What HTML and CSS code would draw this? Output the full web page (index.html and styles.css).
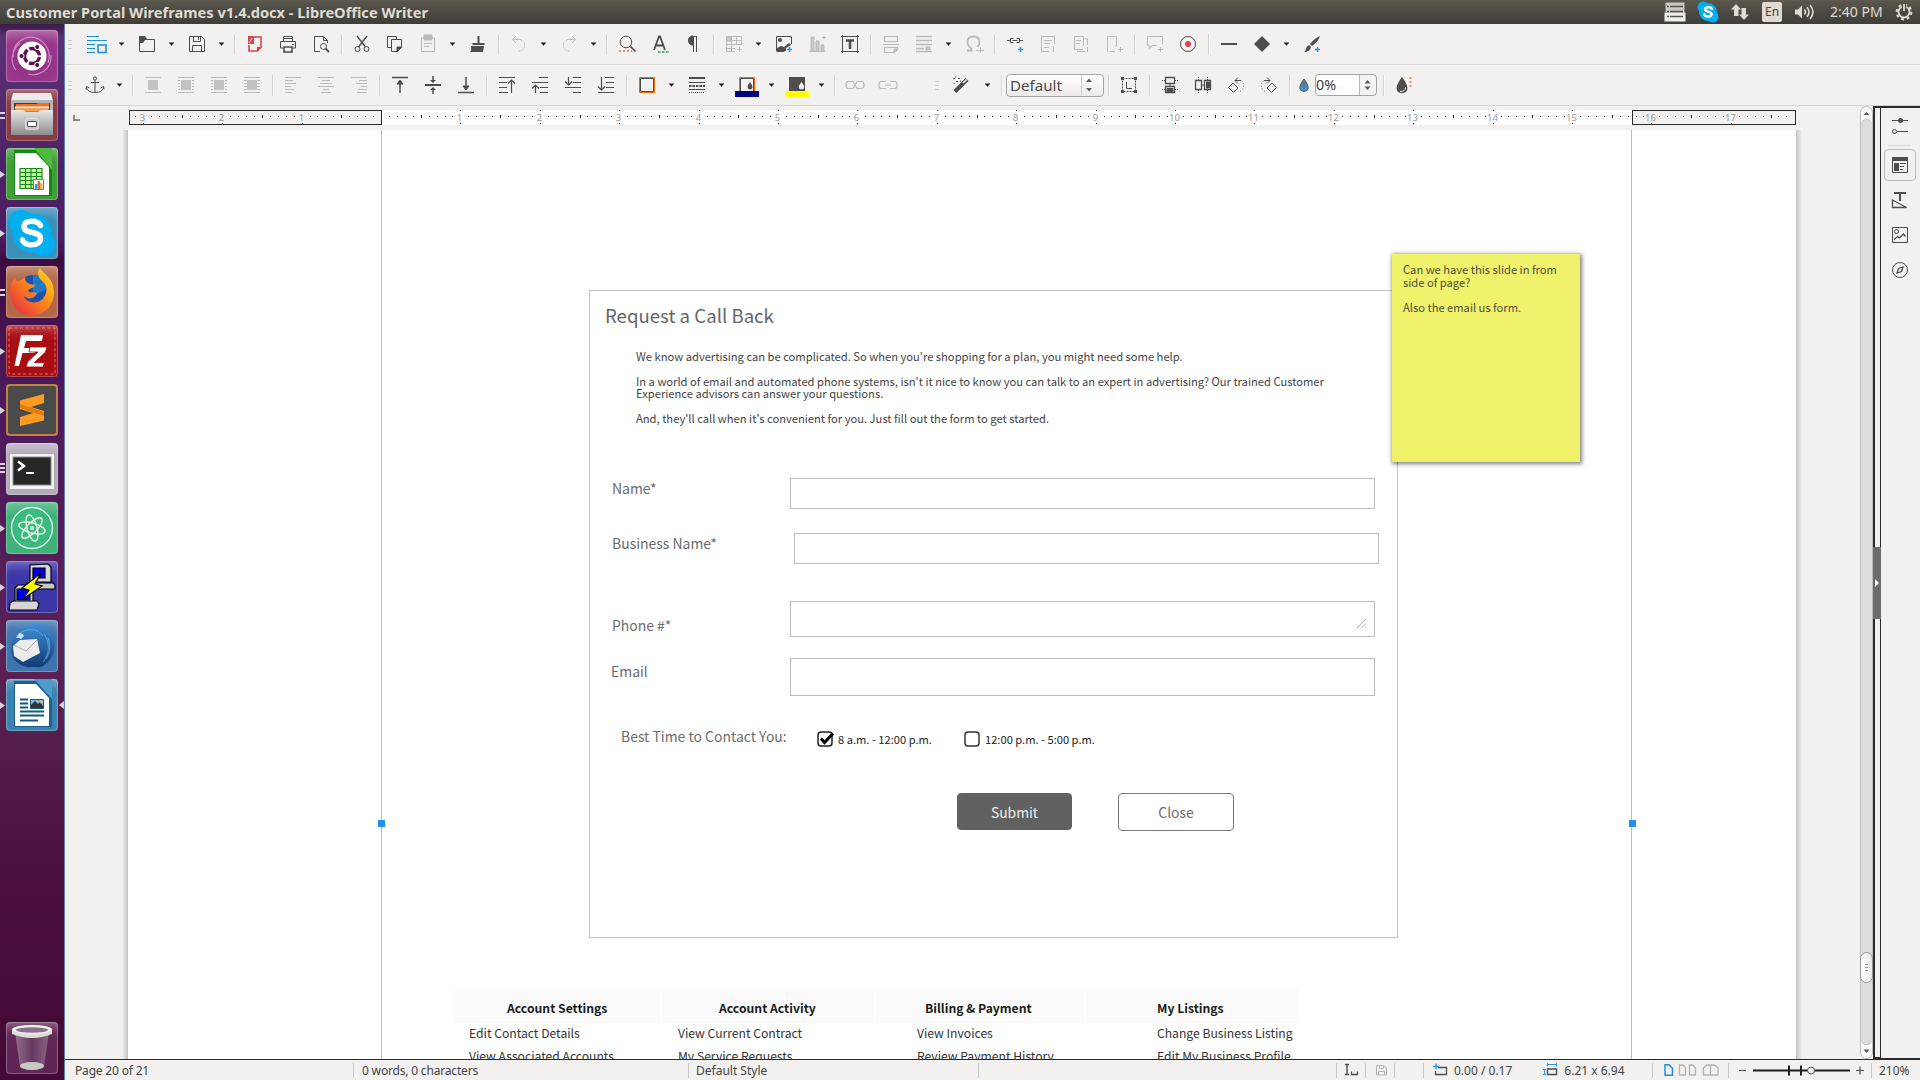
FILE: index.html
```
<!DOCTYPE html>
<html lang="en">
<head>
<meta charset="utf-8">
<title>Customer Portal Wireframes v1.4.docx - LibreOffice Writer</title>
<link rel="stylesheet" href="styles.css">
</head>
<body>
<svg class="defs" width="0" height="0">
  <defs>
    <symbol id="drop" viewBox="0 0 17 24"><path d="M6 10.500h5v1H10v1H9v1H8v-1H7v-1H6z" fill="#1a1a1a"/></symbol>
    <symbol id="grip" viewBox="0 0 6 24"><path d="M0 8.500h4M0 12.500h4M0 16.500h4" stroke="#cbcac8"/></symbol>
    <linearGradient id="steel" x1="0" y1="0" x2="0" y2="1"><stop offset="0" stop-color="#e6e6e6"/><stop offset="1" stop-color="#8e8e8e"/></linearGradient>
    <linearGradient id="fox" x1="1" y1="0" x2="0" y2="1"><stop offset="0" stop-color="#ffe226"/><stop offset=".45" stop-color="#ff8a16"/><stop offset="1" stop-color="#e6214a"/></linearGradient>
    <linearGradient id="bird" x1="0" y1="0" x2="0" y2="1"><stop offset="0" stop-color="#3f8fd6"/><stop offset="1" stop-color="#123a72"/></linearGradient>
    <linearGradient id="bin" x1="0" y1="0" x2="1" y2="0"><stop offset="0" stop-color="#b9a3b7"/><stop offset=".5" stop-color="#6b4468"/><stop offset="1" stop-color="#a78fa5"/></linearGradient>
  </defs>
</svg>

<header class="panel">
  <h1 class="title">Customer Portal Wireframes v1.4.docx - LibreOffice Writer</h1>
  <div class="indicators">
    <svg width="22" height="20" viewBox="0 0 22 20"><path d="M1.500.5h19v10h-19z" fill="#c9c8c4"/><path d="M.5 10.500h21v9H.5z" fill="#efefed"/><path d="M3 4.500h2m1 0h13M3 9.500h2m1 0h13M3 14.500h2m1 0h13" stroke="#55544e" stroke-width="1.500"/></svg>
    <svg width="22" height="22" viewBox="0 0 22 22"><circle cx="11" cy="11" r="9" fill="#00aff0"/><circle cx="6" cy="6" r="5.500" fill="#00aff0"/><circle cx="16" cy="16" r="5.500" fill="#00aff0"/><path d="M15 7.800C14 6 8 5.400 8 8.300c0 3 6.600 1.600 6.600 4.900 0 3.200-6.600 2.700-7.400.4" fill="none" stroke="#fff" stroke-width="2.500" stroke-linecap="round"/></svg>
    <svg width="18" height="18" viewBox="0 0 18 18"><path d="M5 1L0 6.500h3V13h4.500V6.500H10zM13 17l5-5.500h-3V5h-4.500v6.500H8z" fill="#dfdbd2"/></svg>
    <span class="lang">En</span>
    <svg width="22" height="18" viewBox="0 0 22 18"><path d="M1 6.500h3L8 2.500v13l-4-4H1z" fill="#dfdbd2"/><path d="M10.500 6.500q2 2.500 0 5M13 4.200q4 4.800 0 9.600M16 2q6 7 0 14" fill="none" stroke="#dfdbd2" stroke-width="1.600"/></svg>
    <span class="clock">2:40 PM</span>
    <svg width="18" height="18" viewBox="0 0 18 18"><circle cx="9" cy="9" r="7.300" fill="none" stroke="#dfdbd2" stroke-width="2.200" stroke-dasharray="2.800 2.930"/><circle cx="9" cy="9" r="5.500" fill="none" stroke="#dfdbd2" stroke-width="1.800"/><path d="M6.800 0h4.400v6H6.800z" fill="#504e47"/><path d="M9 1v7" stroke="#dfdbd2" stroke-width="1.800"/></svg>
  </div>
</header>

<div class="desktop">
<nav class="launcher">
  <div class="tile ubuntu"><svg viewBox="0 0 52 52"><path d="M7 27C6 12 20 5 30 8c10 4 16 14 12 25M45 25c1 15-13 22-23 19M10 40C2 30 8 18 14 13" fill="none" stroke="#d9a0cc" stroke-width="1.200" opacity=".8"/><circle cx="26" cy="26" r="14.500" fill="#fff"/><circle cx="26" cy="26" r="7.500" fill="none" stroke="#5c1150" stroke-width="3.400" stroke-dasharray="13.700 2" stroke-dashoffset="-1"/><g fill="#5c1150" stroke="#fff"><circle cx="15.500" cy="26" r="2.600"/><circle cx="31.200" cy="17" r="2.600"/><circle cx="31.200" cy="35" r="2.600"/></g></svg></div>
  <div class="tile files"><i class="pips two"></i><svg viewBox="0 0 52 52"><path d="M7 4h38l2 8H5z" fill="#ececec"/><path d="M5 11h42v14H5z" fill="#b5b5b5"/><path d="M8 14h36v10H8z" fill="#3c3c3c"/><path d="M10 15h20l2-1h11v9H9z" fill="#e8732c"/><path d="M9 17.500h34V19H9z" fill="#fff3e0"/><path d="M9 19h34v3H9z" fill="#f0a25a"/><path d="M5 21h12l3 2h12l3-2h12v25H5z" fill="url(#steel)"/><rect x="19.500" y="29.500" width="13" height="11" rx="2" fill="#c9c9c9" stroke="#dedede"/><rect x="21.500" y="32.500" width="9" height="5" rx="1" fill="#fff" stroke="#444"/></svg></div>
  <div class="tile calc"><i class="pips one"></i><svg viewBox="0 0 52 52"><path d="M8 2h28l10 10v36H8z" fill="#148a14"/><path d="M28 0h18v22z" fill="#4fb83e"/><path d="M9 5h21l13 14v28H9z" fill="#fff"/><path d="M14 20.500h22v20H14zM14 24.500h22M14 28.500h22M14 32.500h22M14 36.500h22M19.500 20v20M25 20v20M30.500 20v20" fill="#c5f3a3" stroke="#1b8a1b" stroke-width="1.200"/><path d="M27.500 31.500h10v10h-10z" fill="#fff" stroke="#777"/><path d="M29 36h2.500v5H29z" fill="#2aa5e0"/><path d="M31.500 33H34v8h-2.500z" fill="#ea6a2c"/><path d="M34 35h2.500v6H34z" fill="#f0b24a"/></svg></div>
  <div class="tile skype"><i class="pips one"></i><svg viewBox="0 0 52 52"><circle cx="26" cy="26" r="19.500" fill="#00aff0"/><circle cx="15" cy="15" r="12" fill="#00aff0"/><circle cx="37" cy="37" r="12" fill="#00aff0"/><path d="M34.500 18.500C32 13 18 12 18 19.500c0 8.500 16.500 3.500 16.500 12 0 8.500-16.500 8-18 1.500" fill="none" stroke="#fff" stroke-width="5.500" stroke-linecap="round"/></svg></div>
  <div class="tile firefox"><i class="pips two"></i><svg viewBox="0 0 52 52"><circle cx="27" cy="25" r="16" fill="#1c4fae"/><path d="M27 9c8 0 13 6 14 14L27 30z" fill="#1fa3e0" opacity=".5"/><path d="M4 26c0-7 2-11 5-14l2 4c3-2 6-3 8-5 0 4 2 6 5 7l5 1c0 3-6 3-7 6 3 3 6 0 9 2-2 6-9 7-13 3 2 8 18 10 22-3 2-7-2-10-5-13-4-5-4-9-1-12 2 5 14 9 14 25 0 12-9 22-22 22S4 39 4 26z" fill="url(#fox)"/></svg></div>
  <div class="tile filezilla"><i class="pips one"></i><svg viewBox="0 0 52 52"><rect x="3" y="3" width="46" height="46" fill="none" stroke="#e5a0a0" stroke-width="1" stroke-dasharray="3 2.500" opacity=".7"/><path d="M15 10h22l-1 6H20l-2 7h12l-1.500 5H16.500L13 41H8.500z" fill="#fff"/><path d="M24 22h17l-1.500 5-11 10.500h10L37 42H20l1.500-5L32 27h-9z" fill="#fff" stroke="#b00000" stroke-width=".8"/></svg></div>
  <div class="tile sublime"><i class="pips one"></i><svg viewBox="0 0 52 52"><path d="M38 10v9l-13 4 13 4v9.500L14 42v-9l13-4-13-4v-8.500z" fill="#ff9a22"/><path d="M14 20l24 8v4l-24-8z" fill="#e8790d"/></svg></div>
  <div class="tile terminal"><i class="pips three"></i><svg viewBox="0 0 52 52"><rect x="3.500" y="10.500" width="45" height="36" rx="1" fill="#f2f2f2" stroke="#aaa"/><rect x="7" y="14" width="38" height="28" fill="#262828" stroke="#8b8b8b"/><path d="M12 18.500l6 4.500-6 4.500" fill="none" stroke="#fff" stroke-width="2.400"/><path d="M20 30h8" stroke="#fff" stroke-width="2"/></svg></div>
  <div class="tile atom"><i class="pips one"></i><svg viewBox="0 0 52 52"><circle cx="26" cy="26" r="20.500" fill="#3cb97f" stroke="#e4f6e8" stroke-width="1.300"/><g fill="none" stroke="#e4f6e8" stroke-width="1.400"><ellipse cx="26" cy="26" rx="13.500" ry="5" transform="rotate(15 26 26)"/><ellipse cx="26" cy="26" rx="13.500" ry="5" transform="rotate(75 26 26)"/><ellipse cx="26" cy="26" rx="13.500" ry="5" transform="rotate(-45 26 26)"/></g><circle cx="26" cy="26" r="2" fill="#e4f6e8"/></svg></div>
  <div class="tile putty"><i class="pips one"></i><svg viewBox="0 0 52 52"><g stroke="#000" stroke-width="1.200"><path d="M24 4l18-1 3 3v15H24z" fill="#d6d6d6"/><path d="M27 7h12v10H27z" fill="#0000f0"/><path d="M21 22h26l2 2v4H21z" fill="#c9c9c9"/><path d="M9 27l3-3h15v18H9z" fill="#d6d6d6"/><path d="M11 28h13v11H11z" fill="#0000f0"/><path d="M4 42l3-2h24l2 3-2 6H3z" fill="#d6d6d6"/><path d="M35 12L16 27l7 2-6 9 19-13-7-2z" fill="#ff0"/></g></svg></div>
  <div class="tile thunderbird"><i class="pips one"></i><svg viewBox="0 0 52 52"><path d="M13 13C18 3 34 1 42 9c9 9 8 25 0 33-5 5-9 6-13 5l-8 0C11 45 4 37 5 28c0-6 3-11 8-15z" fill="url(#bird)"/><path d="M14 13c7-5 18-5 23 3M38 14c6 8 6 20-1 28M42 18c3 8 2 15-2 21" fill="none" stroke="#6fb2ea" opacity=".7"/><path d="M7 26l7-6 17-1 3 14-17 9-9-6z" fill="#ecebe9"/><path d="M8 25l12 6 11-11" fill="none" stroke="#b1aea9"/><path d="M13 13q4 0 5 3l-3 3q-3-2-5-1z" fill="#bfe0f8"/></svg></div>
  <div class="tile writer"><i class="pips one"></i><i class="focus"></i><svg viewBox="0 0 52 52"><path d="M8 2h28l10 10v36H8z" fill="#1c608f"/><path d="M28 0h18v20z" fill="#4b9cc6"/><path d="M9 5h21l13 14v28H9z" fill="#fff"/><path d="M14 20.500h8M14 24.500h8M14 28.500h8M14 32.500h24M14 36.500h24M14 41.500h18" stroke="#12577d" stroke-width="1.800"/><path d="M24.500 20.500h13v9h-13z" fill="#7fb9dd" stroke="#12577d"/><path d="M25 29v-3l4-4 3 3 2-2 3 4v2z" fill="#333"/><circle cx="35" cy="23" r="1.300" fill="#f2c230"/></svg></div>
  <div class="tile trash"><svg viewBox="0 0 52 52"><path d="M9 10h34l-5 35q-12 6-24 0z" fill="url(#bin)" opacity=".6"/><ellipse cx="26" cy="44" rx="12" ry="4" fill="#c7c9c5"/><path d="M6 7v5q20 8 40 0V7z" fill="#dcdedb"/><ellipse cx="26" cy="7.500" rx="20" ry="4.500" fill="#f0f1ef"/><ellipse cx="26" cy="8" rx="16" ry="2.800" fill="#8b6f89"/></svg></div>
</nav>

<main class="window">
  <div class="toolbar standard">
    <svg class="grip"><use href="#grip"/></svg>
    <svg class="ic" viewBox="0 0 24 24"><path d="M2 4.500h12M2 8.500h20M2 12.500h8M2 16.500h8M2 20.500h8" stroke="#1e8fe0" stroke-width="1.200"/><rect x="13" y="13" width="8" height="7.500" stroke="#1e8fe0" stroke-width="1.600"/></svg><svg class="dd"><use href="#drop"/></svg>
    <svg class="ic" viewBox="0 0 24 24"><path d="M4 4h6l2 3 8 1H10L8 11H4z" fill="#4d4d4d" stroke="none"/><path d="M4.500 5v14.500h15v-12H9"/></svg><svg class="dd"><use href="#drop"/></svg>
    <svg class="ic" viewBox="0 0 24 24"><path d="M4.500 4.500h12l3 3v12h-15zM8.500 4.500v5h7v-5M7.500 19.500v-6h9v6M13.500 5v3"/></svg><svg class="dd"><use href="#drop"/></svg>
    <i class="sep"></i>
    <svg class="ic" viewBox="0 0 24 24"><path d="M10 5h8v10l-4 4H6v-6" stroke="#d9414e" stroke-width="1.600"/><path d="M5 4h6v8H5zM14 15h5l-5 5z" fill="#d9414e" stroke="none"/><path d="M6 11l3-5" stroke="#fff"/></svg>
    <svg class="ic" viewBox="0 0 24 24"><path d="M7.500 9V4.500h9V9M7 6.500h9M7.500 16h-3V9.500h15V16h-3M16 12.500h2"/><path d="M8 15h8v5H8z" stroke-width="1.600"/></svg>
    <svg class="ic" viewBox="0 0 24 24"><path d="M11 19.500H5.500v-15h9l4 4V11M14.500 4.500v4h4"/><circle cx="14.500" cy="14.500" r="3"/><path d="M16.500 16.500l3.500 3.500" stroke-width="1.800"/></svg>
    <i class="sep"></i>
    <svg class="ic" viewBox="0 0 24 24"><path d="M7 4l8.500 11M17 4L8.500 15" stroke-width="1.400"/><circle cx="7.500" cy="17" r="2.500"/><circle cx="16.500" cy="17" r="2.500"/></svg>
    <svg class="ic" viewBox="0 0 24 24"><path d="M8 15.500H4.500v-11h9V7M8.500 7.500h10v8l-4 4h-6z"/><path d="M14 15h5l-5 5z" fill="#4d4d4d"/></svg>
    <svg class="ic dim" viewBox="0 0 24 24"><path d="M5.500 6v13.500h13V6H5z"/><path d="M8 3h8v5H8z" fill="#4d4d4d"/><path d="M8 11.500h8M8 14.500h5"/></svg><svg class="dd"><use href="#drop"/></svg>
    <svg class="ic" viewBox="0 0 24 24"><path d="M11.500 4h2v7h5v2h-12v-2h5zM5 14h13l-1 6H4c2-2 1-4 1-6z" fill="#4d4d4d" stroke="none"/></svg>
    <i class="sep"></i>
    <svg class="ic dim" viewBox="0 0 24 24"><path d="M9 4L5.500 7.500 9 11M6 7.500h7"/><path d="M13 7.500q4.500 1 4.500 6t-7 6" stroke-dasharray="2 1"/></svg><svg class="dd"><use href="#drop"/></svg>
    <svg class="ic dim" viewBox="0 0 24 24"><path d="M15 4l3.500 3.500L15 11M18 7.500h-7"/><path d="M11 7.500q-4.500 1-4.500 6t7 6" stroke-dasharray="2 1"/></svg><svg class="dd"><use href="#drop"/></svg>
    <i class="sep"></i>
    <svg class="ic" viewBox="0 0 24 24"><circle cx="11" cy="10" r="5.800"/><path d="M15 14l5.500 5.500" stroke-width="1.600"/><path d="M4 19h13" stroke="#f08a6c" stroke-width="2" stroke-dasharray="2 2"/></svg>
    <svg class="ic" viewBox="0 0 24 24"><path d="M6 18l5-13.500h1L17 18M8 13.500h7" stroke-width="1.800"/><path d="M10 20h11" stroke="#52b77e" stroke-width="2" stroke-dasharray="2.500 1.500"/></svg>
    <svg class="ic" viewBox="0 0 24 24"><path d="M12 4v9q-4.500 0-4.500-4.500T12 4z" fill="#4d4d4d"/><path d="M11 4.500h5M12.500 4v16M15.500 4v16"/></svg>
    <i class="sep"></i>
    <svg class="ic dim" viewBox="0 0 24 24"><path d="M13 19.500H4.500v-15h15V13M4 8.500h15M4 12.500h15M4 16.500h9M9.500 4v15M14.500 4v9M15 17.500h5M17.500 15v5"/><path d="M5 5h4v4H5z" fill="#777"/></svg><svg class="dd"><use href="#drop"/></svg>
    <svg class="ic" viewBox="0 0 24 24"><path d="M4.500 19V4.500h15V12M4.500 19.500h8"/><circle cx="8" cy="8" r="2" fill="#4d4d4d" stroke="none"/><path d="M5 19v-3l4-2 3 1 5-4 2 2-5 3v3z" fill="#4d4d4d" stroke="none"/><path d="M15 17.500h5M17.500 15v5" stroke="#2196f3" stroke-width="1.500"/></svg>
    <svg class="ic dim" viewBox="0 0 24 24"><path d="M4 19.500h16M17 5.500h4M19 3.500v4"/><path d="M6 5h3v14H6zM11 9h3v10h-3zM16 13h3v6h-3z" fill="#777"/></svg>
    <svg class="ic" viewBox="0 0 24 24"><path d="M3 4.500h18M3 19.500h18M4.500 3v18M19.500 3v18"/><path d="M8 8.500h8M12 8v9" stroke-width="2.500"/></svg>
    <i class="sep"></i>
    <svg class="ic dim" viewBox="0 0 24 24"><path d="M5.500 4v5.500h13V4.500h-13M4 12.500h16M5.500 15.500h13v2l-3 3h-10z" stroke-width="1.200"/><path d="M15 17h4l-4 4z" fill="#666"/></svg>
    <svg class="ic dim" viewBox="0 0 24 24"><path d="M4 4.500h16M4 8.500h16M4 12.500h16M4 16.500h8M4 19.500h16" stroke-width="1.300"/><path d="M14 15h4v3h-4z" fill="#777"/></svg><svg class="dd"><use href="#drop"/></svg>
    <svg class="ic dim" viewBox="0 0 24 24"><path d="M5 18.500h4.500v-2Q5.500 14 5.500 10q0-5.500 6-5.500t6 5.500q0 3-2 5" stroke-width="1.800"/><path d="M14 18.500h8M18.500 15v6"/></svg>
    <i class="sep"></i>
    <svg class="ic" viewBox="0 0 24 24"><path d="M4 8.500h3M10.500 6.500H7.500v4h3M9.500 8.500h5M13.500 6.500h3v4h-3M17 8.500h3"/><path d="M15 17.500h5M17.500 15v5" stroke="#2196f3" stroke-width="1.400"/></svg>
    <svg class="ic dim" viewBox="0 0 24 24"><path d="M13 19.500H5.500v-15h13V12M8 8.500h8M8 11.500h6M8 15.500h5M17.500 14v6"/></svg>
    <svg class="ic dim" viewBox="0 0 24 24"><path d="M14 17.500H5.500v-13h9V14M7 8.500h5M7 11.500h4M16 6.500h2.500V13M16 19.500H8M18.500 15v5"/></svg>
    <svg class="ic dim" viewBox="0 0 24 24"><path d="M5.500 20V4.500h9V15M8 19.500h5"/><path d="M16 17.500h5M18.500 15v5"/></svg>
    <i class="sep"></i>
    <svg class="ic dim" viewBox="0 0 24 24"><path d="M19.500 12V4.500h-15v9h2v3l3-3H14M15 17.500h5M17.500 15v5"/></svg>
    <svg class="ic" viewBox="0 0 24 24"><circle cx="12" cy="12" r="7.500"/><circle cx="12" cy="12" r="3" fill="#dd3f50" stroke="none"/></svg>
    <i class="sep"></i>
    <svg class="ic" viewBox="0 0 24 24"><path d="M4 12h16" stroke-width="2"/></svg>
    <svg class="ic" viewBox="0 0 24 24"><path d="M12 4l8 8-8 8-8-8z" fill="#4d4d4d" stroke="none"/></svg><svg class="dd"><use href="#drop"/></svg>
    <svg class="ic" viewBox="0 0 24 24"><path d="M20 4q-2 6-8 10l-2-2q5-6 10-8zM9 13l2 2q-1 5-7 5 2-1 2-3t3-4z" fill="#4d4d4d" stroke="none"/><path d="M15 17.500h5M17.500 15v5" stroke="#2196f3" stroke-width="1.400"/></svg>
  </div>

  <div class="toolbar frame">
    <svg class="grip"><use href="#grip"/></svg>
    <svg class="ic" viewBox="0 0 24 24"><circle cx="12" cy="5.500" r="1.600"/><path d="M12 7v12M8 9.500h8M3.500 14.500q1 5 8.500 5t8.500-5M3 16.500l.5-3 3 1.500M21 16.500l-.5-3-3 1.500"/></svg><svg class="dd"><use href="#drop"/></svg>
    <i class="sep"></i>
    <svg class="ic dim" viewBox="0 0 24 24"><path d="M4 4.500h16M4 19.500h16"/><path d="M7 7h10v10H7z" fill="#666" stroke="none"/></svg>
    <svg class="ic dim" viewBox="0 0 24 24"><path d="M4 4.500h16M4 19.500h16M4 7.500h2M4 10.500h2M4 13.500h2M4 16.500h2M18 7.500h2M18 10.500h2M18 13.500h2M18 16.500h2"/><path d="M7 7h10v10H7z" fill="#666" stroke="none"/></svg>
    <svg class="ic dim" viewBox="0 0 24 24"><path d="M4 4.500h16M4 19.500h16M4 7.500h2M4 10.500h2M4 13.500h2M4 16.500h2M18 7.500h2M18 10.500h2M18 13.500h2M18 16.500h2"/><path d="M7 7h10v10H7z" fill="#666" stroke="none"/></svg>
    <svg class="ic dim" viewBox="0 0 24 24"><path d="M4 4.500h16M4 7.500h16M4 10.500h16M4 13.500h16M4 16.500h16M4 19.500h16"/><path d="M7 7h10v10H7z" fill="#666" stroke="none"/></svg>
    <i class="sep"></i>
    <svg class="ic dim" viewBox="0 0 24 24"><path d="M4 4.500h16M4 7.500h8M4 10.500h11M4 13.500h6M4 16.500h9M4 19.500h7"/></svg>
    <svg class="ic dim" viewBox="0 0 24 24"><path d="M4 4.500h16M8 7.500h8M6 10.500h12M4 13.500h16M9 16.500h6M7 19.500h10"/></svg>
    <svg class="ic dim" viewBox="0 0 24 24"><path d="M4 4.500h16M12 7.500h8M9 10.500h11M14 13.500h6M11 16.500h9M10 19.500h10"/></svg>
    <i class="sep"></i>
    <svg class="ic" viewBox="0 0 24 24"><path d="M4 4.500h16M12 20V8" stroke-width="1.500"/><path d="M12 7l3 4H9z" fill="#4d4d4d"/></svg>
    <svg class="ic" viewBox="0 0 24 24"><path d="M4 12h16" stroke-width="2"/><path d="M12 3v5M12 16v5" stroke-width="1.500"/><path d="M12 10l3-3H9zM12 14l3 3H9z" fill="#4d4d4d" stroke="none"/></svg>
    <svg class="ic" viewBox="0 0 24 24"><path d="M4 19.500h16M12 4v11" stroke-width="1.500"/><path d="M12 17l3-4H9z" fill="#4d4d4d"/></svg>
    <i class="sep"></i>
    <svg class="ic" viewBox="0 0 24 24"><path d="M4 4.500h16M4 9.500h8M4 14.500h8M4 19.500h9M16.500 20V7M13 10.500l3.500-3.500 3.500 3.500" stroke-width="1.200"/></svg>
    <svg class="ic" viewBox="0 0 24 24"><path d="M11 4.500h9M4 9.500h16M12 14.500h8M12 19.500h8M7.500 20v-8M4 15.500L7.500 12l3.500 3.500" stroke-width="1.200"/></svg>
    <svg class="ic" viewBox="0 0 24 24"><path d="M12 4.500h8M12 9.500h8M4 14.500h16M12 19.500h8M7.500 4v8M4 8.500L7.500 12 11 8.500" stroke-width="1.200"/></svg>
    <svg class="ic" viewBox="0 0 24 24"><path d="M11 4.500h9M12 9.500h8M12 14.500h8M4 19.500h16M7.500 4v13M4 13.500L7.500 17l3.500-3.500" stroke-width="1.200"/></svg>
    <i class="sep"></i>
    <svg class="ic" viewBox="0 0 24 24"><path d="M4.500 4.500h15v15h-15z" stroke="#f2690d"/><path d="M5.500 5.500h13v13h-13z"/></svg><svg class="dd"><use href="#drop"/></svg>
    <svg class="ic" viewBox="0 0 24 24"><path d="M4 5h16" stroke-width="2"/><path d="M4 9.500h16M4 16.500h16"/><path d="M4 13h16" stroke-width="2" stroke-dasharray="2.500 1"/><path d="M4 19.500h16" stroke-dasharray="1 1"/></svg><svg class="dd"><use href="#drop"/></svg>
    <svg class="ic" viewBox="0 0 24 24"><path d="M4.500 18V4.500h15V18" stroke="#f2690d"/><path d="M5.500 18V5.500h13V18"/><path d="M15 9q5 6.500 0 7.500-5-1 0-7.500z" fill="#4d4d4d" stroke="none"/><path d="M0 18h24v6H0z" fill="#00007f" stroke="none"/></svg><svg class="dd"><use href="#drop"/></svg>
    <svg class="ic" viewBox="0 0 24 24"><path d="M4 4h16v14H4z" fill="#4d4d4d" stroke="none"/><path d="M16.500 9q5.500 6.500 0 7.500-5.500-1 0-7.500z" fill="#f2f1f0" stroke="none"/><path d="M0 18h24v6H0z" fill="#ff0" stroke="none"/></svg><svg class="dd"><use href="#drop"/></svg>
    <i class="sep"></i>
    <svg class="ic dim" viewBox="0 0 24 24"><path d="M10 8.500H5q-2 0-2 3.500t2 3.500h5l2-3.500zM14 8.500h5q2 0 2 3.500t-2 3.500h-5L12 12z" stroke-width="1.200"/></svg>
    <svg class="ic dim" viewBox="0 0 24 24"><path d="M10 8.500H5q-2 0-2 3.500t2 3.500h5M14 8.500h5q2 0 2 3.500t-2 3.500h-5M9 12h6" stroke-width="1.200"/></svg>
    <svg class="grip mid"><use href="#grip"/></svg>
    <svg class="ic wand" viewBox="0 0 24 24"><path d="M6 18.500L18 6.500" stroke-width="4"/><path d="M14 10l3.500-3.500" stroke="#f2f1f0" stroke-width="1.600"/><path d="M4 5.500h2M9 5.500h2M6.500 3.500v1M7 8.500h2M4.500 10.500h1M11 8h1"/></svg><svg class="dd"><use href="#drop"/></svg>
    <i class="sep tight"></i>
    <div class="combo"><span>Default</span><svg width="20" height="20" viewBox="0 0 20 20"><path d="M1.500 0v20" stroke="#cfcecc"/><path d="M9 3.500l3 3.500H6zM9 16.500l3-3.500H6z" fill="#5a5a58"/></svg></div>
    <i class="sep"></i>
    <svg class="ic" viewBox="0 0 24 24"><path d="M5.500 5.500h13v13h-13z" stroke-dasharray="2 1"/><path d="M4 4h3v3H4zM17 4h3v3h-3zM4 17h3v3H4zM17 17h3v3h-3z" fill="#4d4d4d" stroke="none"/><path d="M9.500 9v6.500H15"/></svg>
    <i class="sep"></i>
    <svg class="ic" viewBox="0 0 24 24"><path d="M7.500 4.500h9v6h-9z" stroke-width="1.300"/><path d="M7.500 13.500h9v6h-9z" stroke-width="1.300"/><path d="M9 15.500h6v3H9z" fill="#4d4d4d"/><path d="M12 10v4"/><path d="M4 7.500h3M17 7.500h3M4 16.500h3M17 16.500h3" stroke-dasharray="1 1"/></svg>
    <svg class="ic" viewBox="0 0 24 24"><path d="M4.500 7.500h6v9h-6zM13.500 7.500h6v9h-6z" stroke-width="1.300"/><path d="M15.500 9h3v6h-3z" fill="#4d4d4d"/><path d="M10 12h4"/><path d="M7.500 4v3M7.500 17v3M16.500 4v3M16.500 17v3" stroke-dasharray="1 1"/></svg>
    <svg class="ic" viewBox="0 0 24 24"><path d="M9 10l5 5-4.500 4.500-5-5zM17 7.500h-6M14 4.500l-3 3 3 3"/><path d="M17 7.500q6 6-1 11" stroke-dasharray="1 2"/></svg>
    <svg class="ic" viewBox="0 0 24 24"><path d="M15 10l-5 5 4.500 4.500 5-5zM7 7.500h6M10 4.500l3 3-3 3"/><path d="M7 7.500q-6 6 1 11" stroke-dasharray="1 2"/></svg>
    <i class="sep"></i>
    <svg class="water" viewBox="0 0 10 16"><path d="M5 2q6.500 8.500 3 11.500-3 2-6 0Q-1.500 10.500 5 2z" fill="#3c8fce" stroke="#4b5a66"/><path d="M5 3.500q-3 4-3.300 5.500h6.600Q8 7.500 5 3.500z" fill="#6e7377"/></svg>
    <div class="spin"><span>0%</span><svg width="17" height="20" viewBox="0 0 17 20"><path d="M8.500 5l3 3.500h-6zM8.500 15l3-3.500h-6z" fill="#5a5a58"/></svg></div>
    <i class="sep last"></i>
    <svg class="ic" viewBox="0 0 24 24"><path d="M10 4q9 12 3 15.500-3 1.500-6 0Q1 16 10 4z" fill="#4d4d4d" stroke="none"/><path d="M8 18.500q5 .5 5.500-4" stroke="#f2f1f0"/><path d="M18.500 4v12" stroke="#f08a6c" stroke-width="2" stroke-dasharray="2 2"/></svg>
  </div>

  <div class="workspace">
    <section class="editor">
      <div class="ruler">
        <svg class="tabstop" width="8" height="8" viewBox="0 0 8 8"><path d="M1 0v5H7" fill="none" stroke="#8a8a8a" stroke-width="2"/></svg>
        <svg class="scale" id="scale" width="1668" height="16" viewBox="128 109 1668 16"></svg>
      </div>
      <div class="canvas">
        <article class="page">
          <div class="text-area">
            <i class="handle left"></i><i class="handle right"></i>
            <aside class="note">Can we have this slide in from<br>side of page?<br><br>Also the email us form.</aside>
            <section class="card">
              <h2>Request a Call Back</h2>
              <div class="copy">
                <p>We know advertising can be complicated. So when you're shopping for a plan, you might need some help.</p>
                <p>In a world of email and automated phone systems, isn't it nice to know you can talk to an expert in advertising? Our trained Customer<br>Experience advisors can answer your questions.</p>
                <p>And, they'll call when it's convenient for you. Just fill out the form to get started.</p>
              </div>
              <div class="row name"><label>Name*</label><div class="field"></div></div>
              <div class="row business"><label>Business Name*</label><div class="field"></div></div>
              <div class="row phone"><label>Phone #*</label><div class="field"><svg width="11" height="11" viewBox="0 0 11 11"><path d="M1 10L10 1M5.500 10L10 5.500M9 10l1-1" stroke="#a5a5a5" stroke-width=".8"/></svg></div></div>
              <div class="row email"><label>Email</label><div class="field"></div></div>
              <div class="row times">
                <label>Best Time to Contact You:</label>
                <span class="opt first"><svg width="18" height="18" viewBox="0 0 18 18"><rect x="1" y="2" width="14" height="14" rx="3" fill="#fff" stroke="#222" stroke-width="1.500"/><path d="M4 8.500l3.500 4L16 3.500" fill="none" stroke="#000" stroke-width="3"/></svg>8 a.m. - 12:00 p.m.</span>
                <span class="opt"><svg width="18" height="18" viewBox="0 0 18 18"><rect x="1" y="2" width="14" height="14" rx="3" fill="#fff" stroke="#333" stroke-width="1.500"/></svg>12:00 p.m. - 5:00 p.m.</span>
              </div>
              <div class="actions"><span class="btn solid">Submit</span><span class="btn">Close</span></div>
            </section>
            <div class="links">
              <div class="col c1"><h3>Account Settings</h3><p>Edit Contact Details</p><p>View Associated Accounts</p></div>
              <div class="col c2"><h3>Account Activity</h3><p>View Current Contract</p><p>My Service Requests</p></div>
              <div class="col c3"><h3>Billing &amp; Payment</h3><p>View Invoices</p><p>Review Payment History</p></div>
              <div class="col c4"><h3>My Listings</h3><p>Change Business Listing</p><p>Edit My Business Profile</p></div>
            </div>
          </div>
        </article>
      </div>
    </section>
    <div class="scrollbar">
      <svg width="13" height="12" viewBox="0 0 13 12"><path d="M6.500 5L9.500 8h-6z" fill="#5a5a58"/></svg>
      <div class="track"><div class="thumb"><svg width="5" height="9" viewBox="0 0 5 9"><path d="M1 1.500h3M1 4.500h3M1 7.500h3" stroke="#999"/></svg></div></div>
      <svg width="13" height="13" viewBox="0 0 13 13"><path d="M6.500 8L3.500 4.500h6z" fill="#5a5a58"/></svg>
    </div>
    <div class="splitter"><div class="knob"><svg width="5" height="8" viewBox="0 0 5 8"><path d="M0 0l4 4-4 4z" fill="#fff"/></svg></div></div>
    <aside class="sidebar">
      <svg class="ic" viewBox="0 0 24 24"><path d="M4 6.500h16M9 17.500h11"/><circle cx="12.500" cy="6.500" r="2.500" fill="#4d4d4d" stroke="none"/><circle cx="6.500" cy="17.500" r="2"/></svg>
      <hr>
      <span class="active"><svg class="ic" viewBox="0 0 24 24"><path d="M4.500 4.500h15v15h-15z"/><path d="M4 4h16v4H4zM6 10h5v8H6z" fill="#4d4d4d" stroke="none"/><path d="M12 10.500h6M12 13.500h4M12 16.500h3"/></svg></span>
      <svg class="ic" viewBox="0 0 24 24"><path d="M6 5h12M12 4v9" stroke-width="2"/><path d="M4.500 12v7.500h14z" stroke-width="1.300"/></svg>
      <svg class="ic" viewBox="0 0 24 24"><path d="M4.500 4.500h15v15h-15z"/><circle cx="8.500" cy="8.500" r="2"/><path d="M6 16.500l3.500-3 2 1.500 4-4 2 2.500" stroke-width="1.300"/></svg>
      <svg class="ic" viewBox="0 0 24 24"><circle cx="12" cy="12" r="7.500"/><path d="M15 9l-1.500 4.500L9 15l1.500-4.500z" stroke-width="1.300"/></svg>
    </aside>
  </div>

  <footer class="status">
    <span class="s-page">Page 20 of 21</span>
    <span class="s-words">0 words, 0 characters</span>
    <span class="s-style">Default Style</span>
    <span class="s-blank"></span>
    <span class="s-small"><svg width="15" height="14" viewBox="0 0 15 14"><path d="M1 1.500h4M1 11.500h4M3 1.500v10" stroke="#4d4d4d" stroke-width="1.400"/><path d="M7.500 8.500v3h6v-3" fill="none" stroke="#4d4d4d" stroke-width="1.300"/></svg></span>
    <span class="s-small save"><svg width="11" height="12" viewBox="0 0 11 12"><path d="M.5 1.500h7l3 2.500v7H.5zM3.500 1.500v3h4v-3M2.500 11V7.500h6V11" fill="none" stroke="#b4b3b1"/></svg></span>
    <span class="s-small"></span>
    <span class="s-pos"><svg width="15" height="14" viewBox="0 0 15 14"><path d="M5 4.500h8.500v7h-11V8" fill="none" stroke="#4d4d4d" stroke-width="1.300"/><path d="M0 3.500h6M3 .5v6" stroke="#2196f3" stroke-width="1.300"/></svg><b>0.00 / 0.17</b><svg class="size" width="15" height="14" viewBox="0 0 15 14"><path d="M4.500 6h9v5.500h-9z" fill="none" stroke="#4d4d4d" stroke-width="1.400"/><path d="M4.500 1.500h9M4.500 0v3.500M13.500 0v3.500M1.500 6v6M0 6.500h3M0 11.500h3" stroke="#2196f3"/></svg><b>6.21 x 6.94</b></span>
    <span class="s-view"><svg width="56" height="12" viewBox="0 0 56 12"><path d="M1 .8h4l3.500 3.500v7H1z" fill="none" stroke="#1c8fe3" stroke-width="1.500"/><path d="M15.500 1h3.500l2.500 3v7h-6zM25.500 1h3.500l2.500 3v7h-6zM39.500 11V4l3-3h4v10zM46.500 1h4l3.500 3v7h-7.500" fill="none" stroke="#b4b3b1" stroke-width="1.300"/></svg></span>
    <span class="s-zoom"><svg width="128" height="14" viewBox="0 0 128 14"><path d="M1 7.500h7M118 7.500h8M122 3.500v8" stroke="#4d4d4d" stroke-width="1.200"/><path d="M15 7.500h97" stroke="#1f1f1f" stroke-width="2"/><path d="M51 2.500v10M63 2.500v10" stroke="#1f1f1f" stroke-width="2"/><circle cx="73" cy="7.500" r="3.500" fill="#ececea" stroke="#555"/></svg></span>
    <span class="s-pct">210%</span>
  </footer>
</main>
</div>
<script src="script.js"></script>
</body>
</html>
```
FILE: script.js
```
// Horizontal ruler in inches; inch 0 sits on the left text margin.
const NS = 'http://www.w3.org/2000/svg';
const scale = document.getElementById('scale');
const ORIGIN = 381, INCH = 79.4, LEFT = 129, RIGHT_MARGIN = 1632, RIGHT = 1796;

function add(name, attrs, text) {
  const el = document.createElementNS(NS, name);
  for (const key in attrs) el.setAttribute(key, attrs[key]);
  if (text) el.textContent = text;
  scale.appendChild(el);
}

add('rect', { x: 128, y: 110, width: 1668, height: 15, fill: '#fff' });
add('rect', { x: 129.5, y: 110.5, width: 252, height: 14, fill: '#f2f1f0', stroke: '#2b2b2b' });
add('rect', { x: 1632.5, y: 110.5, width: 163, height: 14, fill: '#f2f1f0', stroke: '#2b2b2b' });

for (let t = -31; t < 179; t++) {
  const x = Math.round(ORIGIN + t * INCH / 10);
  if (x < LEFT + 3 || x > RIGHT - 3 || t === 0) continue;
  if (t % 10 === 0) {
    if (x > ORIGIN && x < RIGHT_MARGIN) add('rect', { x, y: 110, width: 1, height: 1, fill: '#222' });
    add('rect', { x, y: 123, width: 1, height: 1, fill: '#222' });
    add('text', { x: x - 0.5, y: 121, 'text-anchor': 'middle' }, String(Math.abs(t / 10)));
  } else if (t % 5 === 0) {
    add('rect', { x, y: 115, width: 1, height: 3, fill: '#222' });
  } else {
    add('rect', { x, y: 116, width: 1, height: 1, fill: '#222' });
  }
}
```
FILE: styles.css
```
* { box-sizing: border-box; }
html, body { margin: 0; height: 100%; overflow: hidden; }
body { display: flex; flex-direction: column; width: 1920px; height: 1080px; background: #f2f1f0; font-family: "Noto Sans", sans-serif; color: #3c3c3c; }
.defs { position: absolute; }

/* top panel */
.panel { flex: none; height: 24px; display: flex; align-items: center; justify-content: space-between; padding: 0 7px 0 6px; background: linear-gradient(#5f5c50 0, #57554c 2px, #3e3d38 100%); color: #dfdbd2; }
.title { margin: 0; font-size: 14.630px; font-weight: 700; line-height: 24px; white-space: nowrap; }
.indicators { display: flex; align-items: center; }
.indicators svg:nth-child(1) { margin-right: 11px; }
.indicators svg:nth-child(2) { margin-right: 12px; }
.indicators svg:nth-child(3) { margin-right: 13px; }
.lang { width: 20px; height: 20px; margin-right: 12px; border-radius: 2px; background: #dfdbd2; color: #45443e; font-size: 12px; line-height: 20px; text-align: center; }
.clock { box-sizing: content-box; width: 52px; padding-left: 14px; margin-right: 13px; font-size: 14px; line-height: 24px; white-space: nowrap; }

.desktop { flex: 1; display: flex; min-height: 0; }

/* launcher */
.launcher { flex: none; width: 65px; display: flex; flex-direction: column; gap: 7px; padding: 6px 6px; border-right: 1px solid #5d7fae; background: linear-gradient(#3b1a47 0, #5c3277 14px, #4d2468 130px, #4d1c5f 215px, #3f0c40 235px, #4b1a5c 370px, #521c5a 480px, #5a2152 640px, #55204e 700px, #4a0f3c 860px, #430a36 100%); }
.tile { position: relative; flex: none; width: 52px; height: 52px; border-radius: 4px; box-shadow: inset 0 0 0 1px rgba(255,255,255,.25), inset 0 12px 12px -8px rgba(255,255,255,.35); }
.tile svg { display: block; width: 52px; height: 52px; }
.ubuntu { background: radial-gradient(circle at 50% 60%, #8f3086, #a03a8d); }
.files { background: #8a3a45; }
.calc { background: #3f9e37; }
.skype { background: #3d8fb8; }
.firefox { background: #b2694a; }
.filezilla { background: #a80d12; }
.sublime { background: #4a4a4a; box-shadow: inset 0 0 0 2px #c58145; }
.terminal { background: #b4aab8; }
.atom { background: #3fb27a; }
.putty { background: #3c37a8; }
.thunderbird { background: #3f75ae; }
.writer { background: #3a83b1; }
.trash { margin-top: auto; background: rgba(150,90,140,.35); }
.pips { position: absolute; left: -6px; top: 23px; width: 5px; height: 7px; }
.one { background: #d8d3da; clip-path: polygon(0 0, 100% 50%, 0 100%); }
.two { background: linear-gradient(#d8d3da 0 2px, transparent 2px 5px, #d8d3da 5px); }
.three { top: 20px; height: 11px; background: linear-gradient(#d8d3da 0 2px, transparent 2px 4px, #d8d3da 4px 6px, transparent 6px 8px, #d8d3da 8px 10px, transparent 10px); }
.focus { position: absolute; right: -6px; top: 22px; width: 5px; height: 8px; background: #d8d3da; clip-path: polygon(100% 0, 0 50%, 100% 100%); }

/* toolbars */
.window { flex: 1; min-width: 0; display: flex; flex-direction: column; }
.toolbar { flex: none; height: 41px; display: flex; align-items: center; border-bottom: 1px solid #d6d5d3; padding-left: 3px; }
.frame { box-shadow: inset 0 1px #fbfbfa; }
.grip { flex: none; width: 6px; height: 24px; margin-right: 6px; }
.frame .grip { margin-right: 4px; }
.frame .grip.mid { margin: 0 3px 0 31px; }
.ic { flex: none; width: 24px; height: 24px; margin: 0 4px 0 5px; fill: none; stroke: #4d4d4d; stroke-width: 1; }
.wand { margin-right: 6px; }
.dim { opacity: .33; }
.dd { flex: none; width: 17px; height: 24px; }
.sep { flex: none; width: 8px; height: 21px; background: linear-gradient(90deg, transparent 4px, #d3d2d0 4px 5px, #fafaf9 5px 6px, transparent 6px); }
.sep.tight { width: 9px; margin-left: 1px; }
.sep.last { margin-left: 2px; }
.combo { flex: none; width: 98px; height: 23px; display: flex; align-items: center; justify-content: space-between; padding: 0 3px 0 3px; border: 1px solid #a5a4a1; border-radius: 4px; background: linear-gradient(#fff, #ebeae8); font-size: 15.130px; line-height: 21px; color: #4c4c4c; }
.water { flex: none; width: 10px; height: 16px; margin: 0 6px 0 6px; }
.spin { flex: none; width: 62px; height: 22px; display: flex; align-items: center; justify-content: space-between; border: 1px solid #a5a4a1; border-radius: 4px; background: linear-gradient(90deg, #fff 43px, #b9b8b5 43px 44px, #f4f3f2 44px); font-size: 14.300px; line-height: 20px; color: #3c3c3c; }

/* workspace */
.workspace { flex: 1; display: flex; min-height: 0; }
.editor { flex: 1; min-width: 0; display: flex; flex-direction: column; }
.ruler { flex: none; height: 24px; display: flex; padding-top: 3px; }
.tabstop { margin: 6px 47px 0 8px; }
.scale text { font: 9.500px "Noto Sans", sans-serif; fill: #999; }
.canvas { flex: 1; min-height: 0; padding-left: 63px; overflow: hidden; background: linear-gradient(90deg, transparent 57px, #c4c3c1 63px 1731px, transparent 1737px); }
.page { width: 1668px; height: 100%; padding: 0 163px 0 253px; background: #fff; }
.text-area { position: relative; width: 1251px; height: 100%; border: solid #bdbdbd; border-width: 0 1px; padding-top: 160px; font-family: "Noto Sans CJK SC", sans-serif; }
.handle { position: absolute; top: 690px; width: 7px; height: 7px; background: #1f93ea; }
.handle.left { left: -4px; }
.handle.right { right: -5px; }
.note { position: absolute; z-index: 2; left: 1010px; top: 124px; width: 188px; height: 208px; padding: 9px 11px; background: #f1f26b; box-shadow: 1px 1px 4px 1px rgba(0,0,0,.5); font-size: 11.160px; line-height: 12.500px; color: #4e4e3c; white-space: nowrap; }

/* wireframe card */
.card { width: 809px; height: 648px; margin-left: 207px; border: 1px solid #c4c4c4; }
h2 { margin: 12px 0 0 15px; font-size: 18.640px; font-weight: 400; line-height: 24px; color: #666; }
.copy { margin: 22.500px 0 0 46px; font-size: 11.180px; line-height: 12.500px; color: #444; white-space: nowrap; }
.copy p { margin: 0 0 12.500px; }
.row { display: flex; align-items: flex-start; }
.row label { flex: none; font-size: 13.960px; line-height: 20px; color: #6c6c6c; white-space: nowrap; }
.field { flex: none; width: 585px; border: 1px solid #bcbcbc; }
.name { margin: 53.500px 0 0 22px; }
.name label, .business label { width: 178px; }
.name .field, .business .field { height: 31px; }
.business { margin: 24px 0 0 22px; }
.row.business label { width: 182px; }
.phone { margin: 37px 0 0 22px; }
.phone label { width: 178px; padding-top: 14px; }
.phone .field { height: 36px; display: flex; justify-content: flex-end; align-items: flex-end; padding: 0 7px 7px 0; }
.email { margin: 21px 0 0 21px; }
.email label { width: 179px; padding-top: 3px; }
.email .field { height: 38px; }
.times { margin: 30px 0 0 31px; }
.opt { display: flex; align-items: center; gap: 3px; height: 26px; font-size: 11.150px; color: #222; white-space: nowrap; }
.times label { width: 196px; }
.opt.first { width: 147px; }
.actions { display: flex; gap: 46px; margin: 41px 0 0 367px; }
.btn { width: 116px; height: 38px; border: 1px solid #777; border-radius: 4px; font-size: 13.900px; line-height: 36px; text-align: center; color: #6c6c6c; }
.btn.solid { background: #616161; border-color: #616161; color: #eee; width: 115px; height: 37px; }

/* footer links */
.links { display: flex; margin: 51px 0 0 72px; height: 71px; overflow: hidden; font-size: 12.150px; line-height: 23px; color: #333; white-space: nowrap; }
.links h3 { margin: 0 0 -2px; height: 34px; padding-top: 1px; background: #fafafa; font-size: 12.200px; line-height: 36px; color: #1a1a1a; }
.links p { margin: 0; }
.col { flex: none; border-left: 1px solid #fff; }
.c1 { width: 207px; } .c1 h3 { padding-left: 52px; } .c1 p { padding-left: 14px; }
.c2 { width: 213px; } .c2 h3 { padding-left: 57px; } .c2 p { padding-left: 16px; }
.c3 { width: 211px; } .c3 h3 { padding-left: 50px; } .c3 p { padding-left: 42px; }
.c4 { width: 213px; } .c4 h3 { padding-left: 71px; } .c4 p { padding-left: 71px; }

/* scrollbar and sidebar */
.scrollbar { flex: none; width: 13px; display: flex; flex-direction: column; border: 1px solid #bdbcba; border-radius: 7px; background: #f8f8f7; }
.scrollbar > svg { flex: none; margin-left: -1px; }
.track { flex: 1; border-radius: 6px; border: solid #bdbcba; border-width: 1px 0; background: #dddcda; padding-top: 832px; }
.thumb { height: 31px; margin: 0 -1px; border: 1px solid #97968f; border-radius: 7px; background: linear-gradient(90deg, #fff, #e9e8e6); display: flex; align-items: center; justify-content: center; }
.splitter { flex: none; width: 8px; border: solid #2b2b2b; border-width: 2px 1px 2px 2px; display: flex; flex-direction: column; }
.knob { margin: 439px -1px 0 -2px; height: 72px; background: #6c6c6a; display: flex; align-items: center; justify-content: center; }
.sidebar { flex: none; width: 39px; border-top: 2px solid #2b2b2b; border-bottom: 1px solid #2b2b2b; display: flex; flex-direction: column; align-items: center; padding: 6px 2px 0 0; }
.sidebar .ic { margin: 0 0 11px; }
.sidebar hr { width: 23px; margin: -4px 0 3px; border: 0; border-top: 1px solid #d6d5d3; }
.active { flex: none; width: 32px; height: 32px; padding: 3px; border: 1px solid #bbbab8; border-radius: 4px; margin-bottom: 7px; }
.sidebar .active .ic { display: block; margin: 0; }

/* status bar */
.status { flex: none; height: 21px; display: flex; border-top: 1px solid #2b2b2b; font-size: 12px; line-height: 21px; color: #444; white-space: nowrap; }
.status > span { flex: none; display: flex; align-items: center; height: 20px; padding-left: 8px; background: linear-gradient(#c9c8c6, #c9c8c6) left 0 top 3px / 1px 15px no-repeat; }
.status b { font-weight: 400; }
.status .s-page { width: 288px; padding-left: 10px; background: none; letter-spacing: -.180px; }
.status .s-words { width: 335px; padding-left: 9px; letter-spacing: -.180px; }
.s-style { width: 290px; }
.s-blank { width: 358px; }
.s-small { width: 29px; }
.status .save { padding-left: 11px; }
.s-pos { width: 229px; }
.s-pos svg { margin: 0 6px 0 2px; }
.s-pos .size { margin: 0 6px 0 31px; }
.status .s-view { width: 76px; padding-left: 12px; }
.status .s-zoom { width: 143px; padding-left: 10px; }
.s-pct { width: 48px; }
```
